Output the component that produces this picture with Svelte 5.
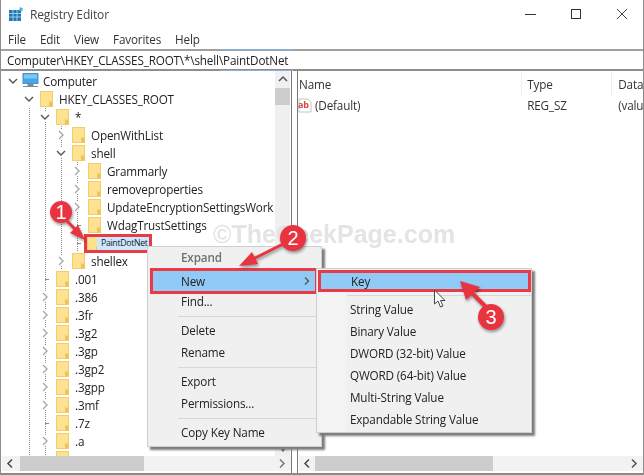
<script lang="ts">
	interface Row {
		name: string;
		depth: number;
		state?: 'open' | 'closed' | 'leaf';
		picked?: boolean;
	}

	const rows: Row[] = [
		{ name: 'HKEY_CLASSES_ROOT', depth: 1, state: 'open' },
		{ name: '*', depth: 2, state: 'open' },
		{ name: 'OpenWithList', depth: 3, state: 'closed' },
		{ name: 'shell', depth: 3, state: 'open' },
		{ name: 'Grammarly', depth: 4, state: 'closed' },
		{ name: 'removeproperties', depth: 4, state: 'closed' },
		{ name: 'UpdateEncryptionSettingsWork', depth: 4, state: 'closed' },
		{ name: 'WdagTrustSettings', depth: 4, state: 'leaf' },
		{ name: 'PaintDotNet', depth: 4, state: 'leaf', picked: true },
		{ name: 'shellex', depth: 3, state: 'closed' },
		{ name: '.001', depth: 2, state: 'leaf' },
		{ name: '.386', depth: 2, state: 'closed' },
		{ name: '.3fr', depth: 2, state: 'closed' },
		{ name: '.3g2', depth: 2, state: 'closed' },
		{ name: '.3gp', depth: 2, state: 'closed' },
		{ name: '.3gp2', depth: 2, state: 'closed' },
		{ name: '.3gpp', depth: 2, state: 'closed' },
		{ name: '.3mf', depth: 2, state: 'closed' },
		{ name: '.7z', depth: 2, state: 'leaf' },
		{ name: '.a', depth: 2, state: 'closed' },
		{ name: '', depth: 2, state: 'leaf' }
	];

	const menuBar = ['File', 'Edit', 'View', 'Favorites', 'Help'];
	const newItems = ['String Value', 'Binary Value', 'DWORD (32-bit) Value', 'QWORD (64-bit) Value', 'Multi-String Value', 'Expandable String Value'];
</script>

{#snippet folder()}
	<svg class="folder" width="13" height="16" viewBox="0 0 13 16">
		<rect x="0.5" y="0.5" width="12" height="15" fill="#ffe291" stroke="#f2cd6b" />
		<path d="M9 10.5h3.5v5H9z" fill="#eec35a" />
	</svg>
{/snippet}

<div class="window">
	<header class="titlebar">
		<svg class="appicon" width="16" height="16" viewBox="0 0 16 16">
			<rect x="1" y="4" width="12" height="11" fill="#1f78b8" />
			<path d="M1 7.5h12M1 11h12M5 4v11M9 4v11" stroke="#bcdcf0" stroke-width="0.8" />
			<path d="M12 1l3 1.5-1 3-3-1z" fill="#4db2e8" />
		</svg>
		<span class="title">Registry Editor</span>
		<div class="controls">
			<svg width="46" height="18" viewBox="0 0 46 18"><path d="M11 9.5h11" stroke="#333" /></svg>
			<svg width="46" height="18" viewBox="0 0 46 18"><rect x="11.5" y="4.5" width="9" height="9" fill="none" stroke="#333" /></svg>
			<svg width="46" height="18" viewBox="0 0 46 18"><path d="M11 4l10 10M21 4L11 14" stroke="#444" /></svg>
		</div>
	</header>

	<nav class="menubar">
		{#each menuBar as m}<span>{m}</span>{/each}
	</nav>

	<div class="address">
		<span>Computer\HKEY_CLASSES_ROOT\*\shell\PaintDotNet</span>
	</div>

	<main class="panes">
		<section class="left">
			<div class="treewrap">
				<div class="tree">
					<div class="row">
						<span class="slot"><svg width="10" height="10" viewBox="0 0 10 10"><path d="M1 3l4 4 4-4" fill="none" stroke="#555" stroke-width="1.4" /></svg></span>
						<svg class="pc" width="18" height="16" viewBox="0 0 18 16">
							<rect x="1" y="0.5" width="15" height="10" fill="#3fa9ee" stroke="#5a8fb8" />
							<rect x="2" y="1.5" width="13" height="4" fill="#7cc8f6" />
							<path d="M6 11h5v2H6zM1 13.5h15" fill="#7b8a96" stroke="#7b8a96" />
						</svg>
						<span class="label">Computer</span>
					</div>
					{#each rows as row}
						<div class="row">
							{#each Array(row.depth) as _, i}
								<span class="slot" class:guide={i > 0}></span>
							{/each}
							<span class="slot" class:guide={row.depth > 1} class:leaf={row.state === 'leaf'}>
								{#if row.state === 'open'}
									<svg width="10" height="10" viewBox="0 0 10 10"><rect width="10" height="10" fill="#fff" /><path d="M1 3l4 4 4-4" fill="none" stroke="#555" stroke-width="1.4" /></svg>
								{:else if row.state === 'closed'}
									<svg width="10" height="10" viewBox="0 0 10 10"><rect width="10" height="10" fill="#fff" /><path d="M3 1l4 4-4 4" fill="none" stroke="#a8a8a8" stroke-width="1.4" /></svg>
								{/if}
							</span>
							{#if row.picked}
								<div class="pickbox">
									{@render folder()}
									<span class="label picked">{row.name}</span>
								</div>
							{:else}
								{@render folder()}
								<span class="label">{row.name}</span>
							{/if}
						</div>
					{/each}
				</div>
				<div class="vscroll">
					<svg width="16" height="17" viewBox="0 0 16 17"><path d="M4 10l4-4 4 4" fill="none" stroke="#555" stroke-width="1.5" /></svg>
					<div class="vthumb"></div>
					<svg class="down" width="16" height="10" viewBox="0 0 16 10"><path d="M5.5 3h5L8 6z" fill="#555" /></svg>
				</div>
			</div>
			<div class="hscroll">
				<svg width="16" height="15" viewBox="0 0 16 15"><path d="M10 3.5l-4 4 4 4" fill="none" stroke="#444" stroke-width="1.5" /></svg>
				<div class="hthumb leftthumb"></div>
				<svg width="16" height="15" viewBox="0 0 16 15"><path d="M6 3.5l4 4-4 4" fill="none" stroke="#777" stroke-width="1.5" /></svg>
			</div>
		</section>

		<div class="splitter"></div>

		<section class="right">
			<div class="columns">
				<span class="col name">Name</span>
				<span class="col type">Type</span>
				<span class="col data">Data</span>
			</div>
			<div class="values">
				<span class="col name">
					<svg class="ab" width="14" height="15" viewBox="0 0 14 15">
						<path d="M1 1h9l3 3v10H1z" fill="#fff" stroke="#c4c4c4" />
						<text x="0" y="10" class="abtext">ab</text>
					</svg>
					(Default)
				</span>
				<span class="col type">REG_SZ</span>
				<span class="col data">(valu</span>
			</div>
			<div class="hscroll grow">
				<svg width="16" height="15" viewBox="0 0 16 15"><path d="M10 3.5l-4 4 4 4" fill="none" stroke="#444" stroke-width="1.5" /></svg>
				<div class="hthumb rightthumb"></div>
				<svg width="16" height="15" viewBox="0 0 16 15"><path d="M6 3.5l4 4-4 4" fill="none" stroke="#555" stroke-width="1.5" /></svg>
			</div>
		</section>
	</main>

	<div class="watermark">©TheGeekPage.com</div>

	<div class="ctx first">
		<div class="item off">Expand</div>
		<div class="item hot-new">New
			<svg width="8" height="10" viewBox="0 0 8 10"><path d="M2 1.5L5.5 5 2 8.5" fill="none" stroke="#555" stroke-width="1.3" /></svg>
		</div>
		<div class="item">Find...</div>
		<div class="sep"></div>
		<div class="item">Delete</div>
		<div class="item">Rename</div>
		<div class="sep"></div>
		<div class="item">Export</div>
		<div class="item">Permissions...</div>
		<div class="sep"></div>
		<div class="item">Copy Key Name</div>
	</div>

	<div class="ctx second">
		<div class="item hot-key">Key</div>
		<div class="sep"></div>
		{#each newItems as it}
			<div class="item">{it}</div>
		{/each}
	</div>

	<svg class="cursor" width="14" height="20" viewBox="0 0 14 20">
		<path d="M1.5 1v14l3.5-3 2.5 6 2.5-1-2.5-5.5H12z" fill="#fff" stroke="#444" />
	</svg>

	<svg class="marks" width="644" height="475" viewBox="0 0 644 475">
		<g class="callout">
			<path d="M62 216l15 15" stroke="#e8343f" stroke-width="3" />
			<path d="M85 240l-15-7 8-8z" fill="#e8343f" />
			<circle cx="61" cy="212" r="11" fill="#e8343f" />
			<text x="61" y="219" class="num">1</text>
		</g>
		<g class="callout">
			<path d="M285 243l-32 16" stroke="#e8343f" stroke-width="3" />
			<path d="M239 266l19-2-6-12z" fill="#e8343f" />
			<circle cx="293" cy="238" r="13" fill="#e8343f" />
			<text x="293" y="245" class="num">2</text>
		</g>
		<g class="callout">
			<path d="M472 293l14 14" stroke="#e8343f" stroke-width="4" />
			<path d="M460 281l6 19 14-13z" fill="#e8343f" />
			<circle cx="491" cy="317" r="13" fill="#e8343f" />
			<text x="491" y="324" class="num">3</text>
		</g>
	</svg>
</div>

<style>
	:global(body) {
		margin: 0;
		background: #fff;
	}

	.window {
		position: relative;
		width: 644px;
		height: 475px;
		box-sizing: border-box;
		border-left: 1px solid #8c8c8c;
		border-right: 1px solid #8c8c8c;
		overflow: hidden;
		display: flex;
		flex-direction: column;
		font-family: 'Open Sans', 'Noto Sans', sans-serif;
		font-size: 11.7px;
		letter-spacing: -0.15px;
		color: #222;
		filter: blur(0.35px);
	}

	.titlebar {
		height: 28px;
		display: flex;
		align-items: center;
		padding-left: 7px;
	}

	.appicon {
		margin-right: 6px;
	}

	.title {
		color: #444;
		font-size: 12px;
	}

	.controls {
		margin-left: auto;
		display: flex;
		margin-right: -9px;
	}

	.controls svg {
		flex: none;
	}

	.menubar {
		height: 21px;
		display: flex;
		gap: 14px;
		align-items: center;
		padding-left: 7px;
		color: #333;
	}

	.address {
		position: relative;
		height: 22px;
		box-sizing: border-box;
		border-top: 2px solid #a0a0a0;
		border-bottom: 2px solid #8e8e8e;
		padding-left: 6px;
		display: flex;
		align-items: center;
		white-space: nowrap;
	}

	.address::before {
		content: '';
		position: absolute;
		left: 219px;
		width: 73px;
		top: -2px;
		bottom: -2px;
		border-top: 1px solid #7db4e6;
		border-bottom: 1px solid #7db4e6;
	}

	.panes {
		flex: 1;
		display: flex;
		min-height: 0;
		border-bottom: 2px solid #8a8a8a;
	}

	.left {
		width: 290px;
		display: flex;
		flex-direction: column;
		border-right: 1px solid #777;
	}

	.treewrap {
		flex: 1;
		display: flex;
		min-height: 0;
	}

	.tree {
		flex: 1;
		overflow: hidden;
		padding: 1px 0 0 4px;
	}

	.row {
		height: 18px;
		display: flex;
		align-items: center;
		white-space: nowrap;
	}

	.slot {
		width: 16px;
		height: 18px;
		flex: none;
		display: flex;
		align-items: center;
		justify-content: center;
	}

	.guide {
		background: linear-gradient(#8a8a8a 50%, transparent 50%) center top / 1px 2px repeat-y;
	}

	.leaf {
		background:
			linear-gradient(90deg, #8a8a8a 50%, transparent 50%) right center / 8px 1px no-repeat,
			linear-gradient(#8a8a8a 50%, transparent 50%) center top / 1px 2px repeat-y;
	}

	.folder {
		flex: none;
		margin-right: 6px;
		margin-left: 3px;
	}

	.pc {
		flex: none;
		margin-right: 3px;
		margin-left: 1px;
	}

	.label {
		color: #222;
	}

	.pickbox {
		box-sizing: border-box;
		height: 19px;
		width: 68px;
		margin: 1px 0 0 -1px;
		border: 3px solid #ea3a44;
		display: flex;
		align-items: center;
		overflow: hidden;
		flex: none;
	}

	.pickbox .folder {
		margin: 0;
	}

	.label.picked {
		position: relative;
		margin-left: -3px;
		padding: 0 2px 0 4px;
		flex: 1;
		font-size: 8.8px;
		letter-spacing: -0.35px;
		line-height: 13px;
		background: #cce8ff;
	}

	.vscroll {
		width: 15px;
		margin-right: 1px;
		background: #f0f0f0;
		display: flex;
		flex-direction: column;
		align-items: center;
	}

	.vscroll svg {
		flex: none;
	}

	.vthumb {
		width: 15px;
		height: 17px;
		background: #cdcdcd;
	}

	.down {
		margin-top: auto;
	}

	.hscroll {
		height: 15px;
		margin-bottom: 2px;
		margin-left: 1px;
		display: flex;
		align-items: center;
		background: #f2f2f2;
	}

	.hthumb {
		height: 15px;
		background: #cdcdcd;
	}

	.leftthumb {
		width: 124px;
		margin: 0 auto 0 2px;
	}

	.rightthumb {
		width: 178px;
		margin-right: auto;
	}

	.hscroll svg {
		flex: none;
	}

	.hscroll svg:last-child {
		margin-right: 1px;
	}

	.splitter {
		width: 5px;
		flex: none;
	}

	.right {
		flex: 1;
		display: flex;
		flex-direction: column;
		border-left: 1px solid #777;
		min-width: 0;
	}

	.columns,
	.values {
		display: flex;
		align-items: center;
		flex: none;
		color: #333;
		white-space: nowrap;
	}

	.columns {
		height: 25px;
		box-sizing: border-box;
		padding-top: 1px;
	}

	.values {
		flex: 1;
		height: 23px;
		align-items: flex-start;
		padding-top: 1px;
	}

	.col {
		box-sizing: border-box;
		padding-left: 1px;
	}

	.col.name {
		width: 227px;
		display: flex;
		align-items: center;
		gap: 3px;
	}

	.col.type {
		width: 91px;
		padding-left: 5px;
	}

	.col.data {
		overflow: hidden;
		padding-left: 6px;
	}

	.values .col.name {
		padding-left: 0;
	}

	.columns .col {
		height: 23px;
		line-height: 23px;
	}

	.columns .col.name,
	.columns .col.type {
		border-right: 1px solid #eee;
	}

	.abtext {
		font: bold 9px 'Open Sans', sans-serif;
		fill: #d3463a;
	}

	.watermark {
		position: absolute;
		left: 212px;
		top: 220px;
		font: bold 25px 'Liberation Sans', sans-serif;
		letter-spacing: 0;
		color: #e4e4e4;
		white-space: nowrap;
	}

	.ctx {
		position: absolute;
		box-sizing: border-box;
		background: #f0f0f0;
		border: 1px solid #cfcfcf;
		box-shadow: 3px 3px 2px #7c7c7c;
		color: #222;
	}

	.first {
		left: 146px;
		top: 246px;
		width: 175px;
		height: 201px;
	}

	.second {
		left: 315px;
		top: 268px;
		width: 216px;
		height: 165px;
		padding-top: 1px;
		background: linear-gradient(90deg, #f3f3f3 30px, #f0f0f0 30px);
	}

	.item {
		height: 22px;
		line-height: 20px;
		padding-left: 33px;
		white-space: nowrap;
		box-sizing: border-box;
	}

	.second .item {
		padding-left: 33px;
	}

	.off {
		color: #707070;
		font-weight: 600;
	}

	.hot-new,
	.second .hot-key {
		background: #91c9f7;
		border: 3px solid #ea3a44;
		line-height: 16px;
		display: flex;
		align-items: center;
		padding-bottom: 1px;
	}

	.hot-new {
		height: 26px;
		width: 168px;
		margin: -1px 0 -3px 2px;
		padding-left: 28px;
		justify-content: space-between;
		padding-right: 4px;
	}

	.second .hot-key {
		margin-left: 1px;
		padding-left: 30px;
	}

	.sep {
		height: 7px;
		margin-left: 30px;
		background: linear-gradient(#d7d7d7, #d7d7d7) center / 100% 1px no-repeat;
	}

	.cursor {
		position: absolute;
		left: 432px;
		top: 289px;
	}

	.marks {
		position: absolute;
		left: -1px;
		top: 0;
		pointer-events: none;
	}

	.callout {
		filter: drop-shadow(1px 2px 1.5px rgba(0, 0, 0, 0.4));
	}

	.num {
		font: 20px 'Liberation Sans', sans-serif;
		letter-spacing: 0;
		fill: #fff;
		text-anchor: middle;
	}
</style>
